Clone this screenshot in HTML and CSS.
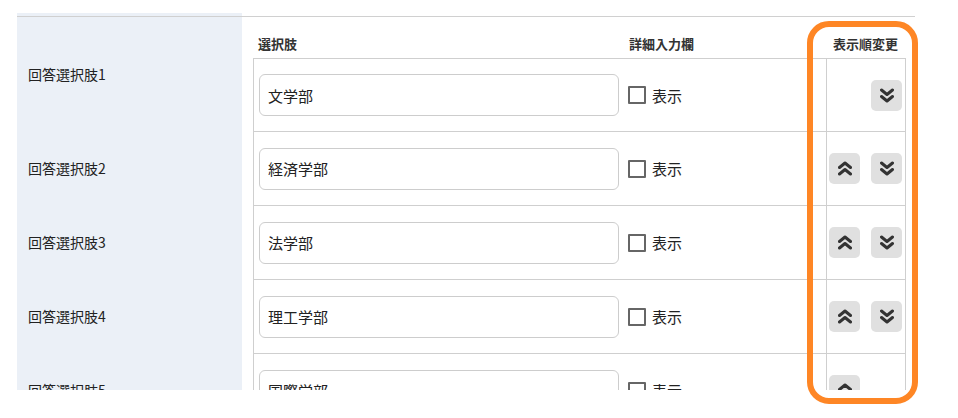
FILE: index.html
```html
<!DOCTYPE html>
<html lang="ja">
<head>
    <meta charset="UTF-8">
    <meta name="viewport" content="width=device-width, initial-scale=1.0">
    <title>回答選択肢</title>
    <link rel="stylesheet" href="styles.css">
</head>
<body>
    <div class="card">
        <div class="label label-first">回答選択肢1</div>
        <div class="head">
            <span class="head-text">選択肢</span>
            <span class="head-detail">詳細入力欄</span>
            <span class="head-order">表示順変更</span>
        </div>
        <div class="choice">
            <div class="row">
                <div class="cell-text"><input type="text" value="文学部"></div>
                <label class="cell-detail"><input type="checkbox">表示</label>
                <div class="cell-order">
                    <button class="move move-down" type="button"><svg viewBox="0 0 14 15"><polyline points="1.5,2 7,6.5 12.5,2"/><polyline points="1.5,8.5 7,13 12.5,8.5"/></svg></button>
                </div>
            </div>
        </div>

        <div class="label">回答選択肢2</div>
        <div class="choice">
            <div class="row">
                <div class="cell-text"><input type="text" value="経済学部"></div>
                <label class="cell-detail"><input type="checkbox">表示</label>
                <div class="cell-order">
                    <button class="move move-up" type="button"><svg viewBox="0 0 14 15"><polyline points="1.5,6.5 7,2 12.5,6.5"/><polyline points="1.5,13 7,8.5 12.5,13"/></svg></button>
                    <button class="move move-down" type="button"><svg viewBox="0 0 14 15"><polyline points="1.5,2 7,6.5 12.5,2"/><polyline points="1.5,8.5 7,13 12.5,8.5"/></svg></button>
                </div>
            </div>
        </div>

        <div class="label">回答選択肢3</div>
        <div class="choice">
            <div class="row">
                <div class="cell-text"><input type="text" value="法学部"></div>
                <label class="cell-detail"><input type="checkbox">表示</label>
                <div class="cell-order">
                    <button class="move move-up" type="button"><svg viewBox="0 0 14 15"><polyline points="1.5,6.5 7,2 12.5,6.5"/><polyline points="1.5,13 7,8.5 12.5,13"/></svg></button>
                    <button class="move move-down" type="button"><svg viewBox="0 0 14 15"><polyline points="1.5,2 7,6.5 12.5,2"/><polyline points="1.5,8.5 7,13 12.5,8.5"/></svg></button>
                </div>
            </div>
        </div>

        <div class="label">回答選択肢4</div>
        <div class="choice">
            <div class="row">
                <div class="cell-text"><input type="text" value="理工学部"></div>
                <label class="cell-detail"><input type="checkbox">表示</label>
                <div class="cell-order">
                    <button class="move move-up" type="button"><svg viewBox="0 0 14 15"><polyline points="1.5,6.5 7,2 12.5,6.5"/><polyline points="1.5,13 7,8.5 12.5,13"/></svg></button>
                    <button class="move move-down" type="button"><svg viewBox="0 0 14 15"><polyline points="1.5,2 7,6.5 12.5,2"/><polyline points="1.5,8.5 7,13 12.5,8.5"/></svg></button>
                </div>
            </div>
        </div>

        <div class="label">回答選択肢5</div>
        <div class="choice">
            <div class="row">
                <div class="cell-text"><input type="text" value="国際学部"></div>
                <label class="cell-detail"><input type="checkbox">表示</label>
                <div class="cell-order">
                    <button class="move move-up" type="button"><svg viewBox="0 0 14 15"><polyline points="1.5,6.5 7,2 12.5,6.5"/><polyline points="1.5,13 7,8.5 12.5,13"/></svg></button>
                </div>
            </div>
        </div>
    </div>

    <div class="highlight"></div>
</body>
</html>
```

FILE: styles.css
```css
body {
    margin: 0;
    background-color: #fff;
    color: #222;
    font-family: "Noto Sans CJK JP", "Noto Sans", sans-serif;
}
.card {
    position: relative;
    box-sizing: border-box;
    width: 898px;
    height: 377px;
    margin: 13px 0 0 17px;
    padding-top: 4px;
    overflow: hidden;
    display: grid;
    grid-template-columns: 225px 1fr;
    grid-template-rows: 41px 73px repeat(4, 74px);
    background: linear-gradient(to right, #ebf0f7 225px, #fff 225px);
}
.card::before {
    content: "";
    position: absolute;
    top: 3px;
    left: 0;
    right: 0;
    height: 1px;
    background-color: #d0d0d0;
}
.label {
    display: flex;
    align-items: center;
    padding-left: 11px;
    font-size: 14px;
}
.label-first {
    grid-row: span 2;
}
.head {
    display: grid;
    grid-template-columns: 371px 202px 1fr;
    align-items: end;
    padding: 0 9px 5px 11px;
    font-size: 13px;
    font-weight: 700;
    color: #333;
}
.head-text,
.head-detail {
    padding-left: 5px;
}
.head-order {
    text-align: right;
    padding-right: 8px;
}
.choice {
    padding: 0 9px 0 11px;
}
.row {
    height: 100%;
    box-sizing: border-box;
    display: grid;
    grid-template-columns: 370px 202px 1fr;
    border: 1px solid #cfcfcf;
    border-bottom: none;
}
.cell-text {
    display: flex;
    align-items: center;
    padding-left: 5px;
}
.cell-text input {
    box-sizing: border-box;
    width: 360px;
    height: 42px;
    margin: 0;
    padding: 0 8px;
    border: 1px solid #cdcdcd;
    border-radius: 6px;
    font-family: inherit;
    font-size: 15px;
    color: #222;
}
.cell-detail {
    display: flex;
    align-items: center;
    gap: 6px;
    padding-left: 4px;
    font-size: 15px;
}
.cell-detail input {
    appearance: none;
    width: 18px;
    height: 18px;
    margin: 0;
    border: 2px solid #666;
    border-radius: 1px;
    background-color: #fff;
}
.cell-order {
    display: grid;
    grid-template-columns: 31px 31px;
    column-gap: 11px;
    align-items: center;
    padding-left: 2px;
    border-left: 1px solid #cfcfcf;
}
.move {
    width: 31px;
    height: 31px;
    padding: 0;
    border: none;
    border-radius: 5px;
    background-color: #e0e0e0;
    display: flex;
    align-items: center;
    justify-content: center;
}
.move svg {
    width: 14px;
    height: 15px;
    fill: none;
    stroke: #333;
    stroke-width: 3;
    stroke-linecap: round;
    stroke-linejoin: round;
}
.move-up {
    grid-column: 1;
}
.move-down {
    grid-column: 2;
}
.highlight {
    position: absolute;
    left: 807px;
    top: 21px;
    width: 111px;
    height: 383px;
    box-sizing: border-box;
    border: 6px solid #fe8625;
    border-radius: 22px;
}
```
